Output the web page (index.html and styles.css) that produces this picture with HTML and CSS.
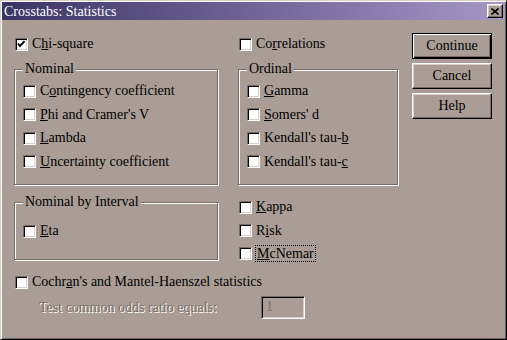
FILE: index.html
```html
<!DOCTYPE html>
<html lang="en">
<head>
  <meta charset="UTF-8" />
  <title>Crosstabs: Statistics</title>
  <link rel="stylesheet" href="styles.css">
</head>
<body>
  <div class="window">
    <div class="titlebar">
      <span class="title">Crosstabs: Statistics</span>
      <span class="close">
        <svg width="8" height="7" viewBox="0 0 8 7"><path d="M0.5 0.5 L7.5 6.5 M7.5 0.5 L0.5 6.5" stroke="#000" stroke-width="1.6" fill="none"/></svg>
      </span>
    </div>

    <div class="dialog">
      <div class="main">
        <div class="grid">
          <label class="check">
            <span class="box">
              <svg width="11" height="11" viewBox="0 0 11 11"><path d="M2 4.5 L4 7 L8.6 2.2" stroke="#000" stroke-width="1.9" fill="none"/></svg>
            </span>
            <span>C<u>h</u>i-square</span>
          </label>
          <label class="check">
            <span class="box"></span>
            <span>Co<u>r</u>relations</span>
          </label>

          <div class="group">
            <span class="legend">Nominal</span>
            <div class="group-list">
              <label class="check"><span class="box"></span><span>C<u>o</u>ntingency coefficient</span></label>
              <label class="check"><span class="box"></span><span><u>P</u>hi and Cramer's V</span></label>
              <label class="check"><span class="box"></span><span><u>L</u>ambda</span></label>
              <label class="check"><span class="box"></span><span><u>U</u>ncertainty coefficient</span></label>
            </div>
          </div>

          <div class="group">
            <span class="legend">Ordinal</span>
            <div class="group-list">
              <label class="check"><span class="box"></span><span><u>G</u>amma</span></label>
              <label class="check"><span class="box"></span><span><u>S</u>omers' d</span></label>
              <label class="check"><span class="box"></span><span>Kendall's tau-<u>b</u></span></label>
              <label class="check"><span class="box"></span><span>Kendall's tau-<u>c</u></span></label>
            </div>
          </div>

          <div class="group interval">
            <span class="legend">Nominal by Interval</span>
            <div class="group-list">
              <label class="check"><span class="box"></span><span><u>E</u>ta</span></label>
            </div>
          </div>

          <div class="side-list">
            <label class="check"><span class="box"></span><span><u>K</u>appa</span></label>
            <label class="check"><span class="box"></span><span>R<u>i</u>sk</span></label>
            <label class="check"><span class="box"></span><span class="focus"><u>M</u>cNemar</span></label>
          </div>
        </div>

        <label class="check cochran">
          <span class="box"></span>
          <span>Cochr<u>a</u>n's and Mantel-Haenszel statistics</span>
        </label>

        <div class="odds">
          <span class="disabled">Test common odds ratio equals:</span>
          <span class="field">1</span>
        </div>
      </div>

      <div class="buttons">
        <button class="btn default">Continue</button>
        <button class="btn">Cancel</button>
        <button class="btn">Help</button>
      </div>
    </div>
  </div>
</body>
</html>
```

FILE: styles.css
```css
body {
  margin: 0;
  padding: 0;
  font-family: "Liberation Serif", "Times New Roman", serif;
  font-size: 14px;
  color: #000;
  background: #a99d95;
}

.window {
  width: 507px;
  height: 340px;
  box-sizing: border-box;
  border: 1px solid;
  border-color: #d8d0c8 #000 #000 #d8d0c8;
  box-shadow: inset 1px 1px 0 #fff, inset -1px -1px 0 #6c625a;
  background: #a99d95;
  padding: 1px;
}

.titlebar {
  height: 18px;
  display: flex;
  align-items: center;
  justify-content: space-between;
  padding: 0 2px 0 2px;
  background: linear-gradient(90deg, #3a3464, #a696c6);
  color: #fff;
}

.title {
  line-height: 18px;
  padding-top: 1px;
}

.close {
  width: 16px;
  height: 14px;
  box-sizing: border-box;
  display: flex;
  align-items: center;
  justify-content: center;
  background: #a99d95;
  border: 1px solid;
  border-color: #fff #000 #000 #fff;
  box-shadow: inset -1px -1px 0 #786c64, inset 1px 1px 0 #d8d0c8;
}

.dialog {
  display: flex;
  gap: 14px;
  padding: 13px 0 0 12px;
}

.main {
  width: 384px;
  padding-top: 3px;
}

.grid {
  display: grid;
  grid-template-columns: 204px 160px;
  grid-template-rows: 16px 116px 58px;
  column-gap: 20px;
  row-gap: 17px;
}

.check {
  display: flex;
  align-items: center;
  gap: 4px;
  height: 16px;
  padding-left: 1px;
  white-space: nowrap;
}

.box {
  width: 13px;
  height: 13px;
  box-sizing: border-box;
  flex: none;
  display: flex;
  align-items: center;
  justify-content: center;
  background: #fff;
  border: 1px solid;
  border-color: #786c64 #fff #fff #786c64;
  box-shadow: inset 1px 1px 0 #000, inset -1px -1px 0 #d8d0c8;
}

.group {
  position: relative;
  border: 1px solid #786c64;
  box-shadow: inset 1px 1px 0 #fff, 1px 1px 0 #fff;
  padding: 13px 0 0 7px;
}

.group.interval {
  padding-top: 20px;
}

.legend {
  position: absolute;
  top: -9px;
  left: 8px;
  padding: 0 2px;
  line-height: 16px;
  background: #a99d95;
}

.group-list {
  display: flex;
  flex-direction: column;
  gap: 7.6px;
}

.side-list {
  display: flex;
  flex-direction: column;
  gap: 7.5px;
  margin-top: -3px;
}

.focus {
  outline: 1px dotted #000;
  outline-offset: 0;
  padding: 0 1px;
  line-height: 15px;
}

.cochran {
  margin-top: 14px;
}

.odds {
  display: flex;
  align-items: center;
  gap: 44px;
  margin-top: 6px;
  padding-left: 25px;
}

.disabled {
  color: #7a6e66;
  text-shadow: 1px 1px 0 #fff;
}

.field {
  width: 44px;
  height: 23px;
  box-sizing: border-box;
  padding-left: 4px;
  line-height: 20px;
  color: #7a6e66;
  border: 1px solid;
  border-color: #786c64 #fff #fff #786c64;
  box-shadow: inset 1px 1px 0 #000, inset -1px -1px 0 #d8d0c8;
}

.buttons {
  display: flex;
  flex-direction: column;
  gap: 4px;
}

.btn {
  width: 80px;
  height: 26px;
  box-sizing: border-box;
  padding: 0;
  font-family: inherit;
  font-size: 14px;
  color: #000;
  background: #a99d95;
  border: 1px solid;
  border-color: #fff #000 #000 #fff;
  box-shadow: inset -1px -1px 0 #786c64, inset 1px 1px 0 #d8d0c8;
}

.btn.default {
  border-color: #000;
  box-shadow: inset 1px 1px 0 #fff, inset -1px -1px 0 #000, inset -2px -2px 0 #786c64;
}
```
